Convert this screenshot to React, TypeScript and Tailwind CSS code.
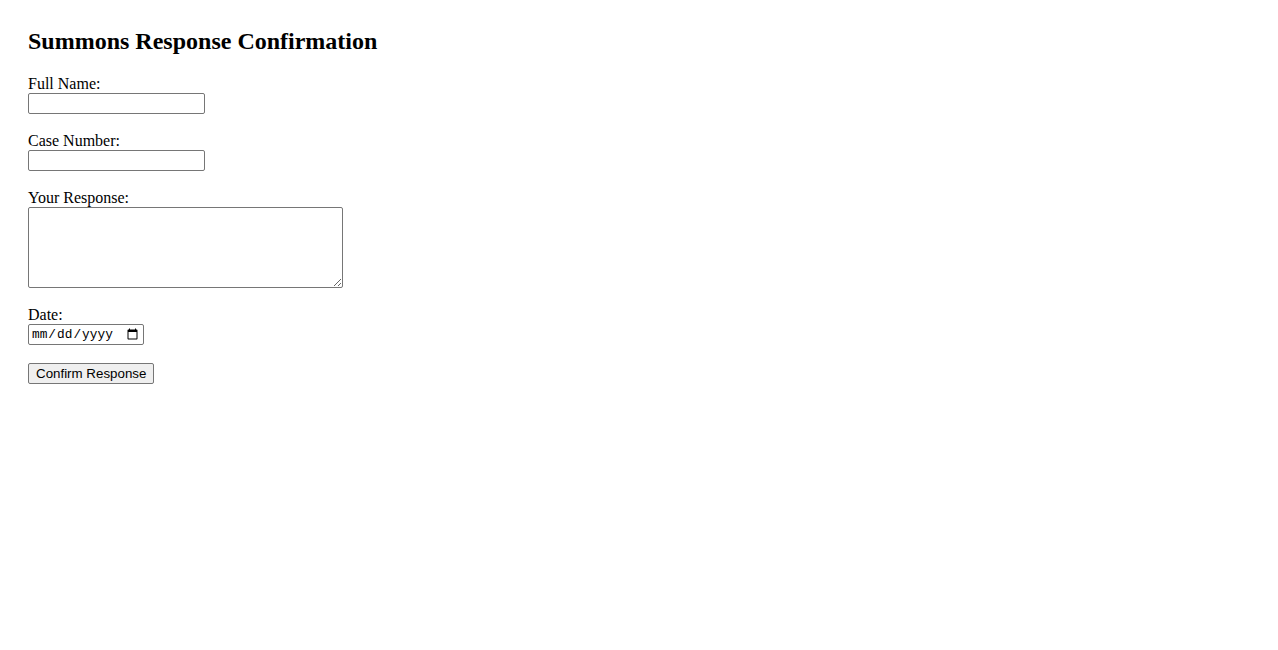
import React from "react";

const fieldClass =
  "block h-[21px] border border-[#767676] rounded-[2px] bg-white px-[2px] py-[1px] text-[13.33px] font-['Liberation_Sans',Arial,sans-serif] text-black";

const labelClass = "block text-[16px] leading-[18px]";

const App = () => {
  return (
    <div className="min-h-screen bg-white px-[28px] pt-[28px] text-black font-['Liberation_Serif','Times_New_Roman',serif]">
      <h2 className="text-[24px] font-bold leading-[normal] mb-[19.92px]">
        Summons Response Confirmation
      </h2>
      <form onSubmit={(e) => e.preventDefault()}>
        <div className="mb-[18px]">
          <label htmlFor="fullName" className={labelClass}>
            Full Name:
          </label>
          <input id="fullName" type="text" className={`${fieldClass} w-[177px]`} />
        </div>
        <div className="mb-[18px]">
          <label htmlFor="caseNumber" className={labelClass}>
            Case Number:
          </label>
          <input id="caseNumber" type="text" className={`${fieldClass} w-[177px]`} />
        </div>
        <div className="mb-[18px]">
          <label htmlFor="response" className={labelClass}>
            Your Response:
          </label>
          <textarea
            id="response"
            className="block w-[315px] h-[81px] border border-[#767676] rounded-[2px] bg-white p-[2px] text-[13.33px] font-['Liberation_Mono',monospace] resize"
          />
        </div>
        <div className="mb-[18px]">
          <label htmlFor="date" className={labelClass}>
            Date:
          </label>
          <input
            id="date"
            type="date"
            className="block w-[116px] h-[21px] border border-[#767676] rounded-[2px] bg-white pl-[2px] pr-[4px] text-[12.8px] font-['Liberation_Mono',monospace] text-black [&::-webkit-calendar-picker-indicator]:m-0 [&::-webkit-calendar-picker-indicator]:p-0 [&::-webkit-calendar-picker-indicator]:w-[13px] [&::-webkit-calendar-picker-indicator]:h-[13px]"
          />
        </div>
        <button
          type="submit"
          className="block h-[21px] border border-[#767676] rounded-[2px] bg-[#efefef] px-[7px] text-[13.33px] leading-[normal] font-['Liberation_Sans',Arial,sans-serif] text-black"
        >
          Confirm Response
        </button>
      </form>
    </div>
  );
};

export default App;
